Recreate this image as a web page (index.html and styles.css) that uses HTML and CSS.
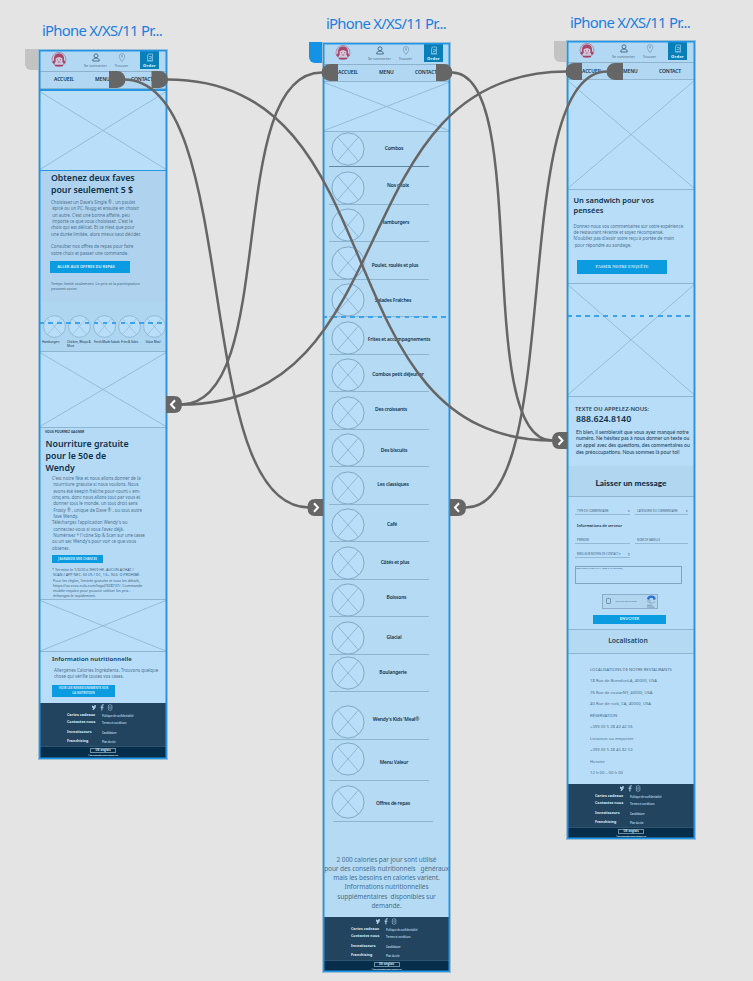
FILE: index.html
```html
<!DOCTYPE html>
<html lang="fr">
<head>
<meta charset="utf-8">
<title>Prototype</title>
<link rel="stylesheet" href="styles.css">
</head>
<body>
<svg class="defs" aria-hidden="true">
  <symbol id="x" viewBox="0 0 100 100" preserveAspectRatio="none"><path d="M0 0L100 100M100 0L0 100" fill="none" stroke="#8bb3d0" stroke-width=".8" vector-effect="non-scaling-stroke"/></symbol>
  <symbol id="ring" viewBox="0 0 34 34"><circle cx="17" cy="17" r="16.1" fill="#b9def9" stroke="#7fa9c6" stroke-width="1"/><path d="M6.500 5L27.500 29M27.500 5L6.500 29" stroke="#8bb3d0" stroke-width=".9"/></symbol>
  <symbol id="logo" viewBox="0 0 16 16"><circle cx="8" cy="7.500" r="7" fill="#c3cfe4" stroke="#a66d8c" stroke-width=".7"/><path d="M3 8C2.500 3.500 5 1.500 8 1.500s5.500 2 5 6.500l1.700 2.500-2 1.500-1.500-2.500V6H4.800v3.500L3.300 12l-2-1.500z" fill="#a8476a"/><path d="M4.800 6.500c2-2 4.400-2 6.400 0V9c0 2-1.800 3-3.200 3s-3.200-1-3.200-3z" fill="#d5c4d8"/><path d="M6 7.700h1M9 7.700h1M6.800 10h2.400" stroke="#a23f62" stroke-width=".7"/><path d="M4 13.500h8" stroke="#a23f62" stroke-width="1.500"/></symbol>
  <symbol id="user" viewBox="0 0 8 9"><circle cx="4" cy="2.800" r="2" fill="none" stroke="#43647e" stroke-width=".9"/><path d="M.8 8V6.500Q2.500 5 4 5t3.200 1.500V8z" fill="none" stroke="#43647e" stroke-width=".9"/></symbol>
  <symbol id="pin" viewBox="0 0 8 9"><path d="M4 8.500C2.500 6.500 1.300 5 1.300 3.300a2.700 2.700 0 0 1 5.400 0C6.700 5 5.500 6.500 4 8.500z" fill="none" stroke="#7398b4" stroke-width=".7"/><path d="M3 3.200h2M4 2v2.500" stroke="#7398b4" stroke-width=".7"/></symbol>
  <symbol id="bag" viewBox="0 0 8 9"><path d="M2.300 1h4.200v6.500h-5V3zM2.800 3.500h2.500v2h-2.500M1 8h6" fill="none" stroke="#9ed2ef" stroke-width=".7"/></symbol>
  <symbol id="social" viewBox="0 0 22 7"><path d="M1 1.300l1.500 1L4 1l1 .3-.4 2.200L2.800 6 1.300 5.700l.8-1.200L1 3.200z" fill="#a9cce5"/><path d="M12.800.8h-.6q-1.300 0-1.300 1.400V6.500M9.500 3.200h3" fill="none" stroke="#a9cce5" stroke-width="1.100"/><rect x="17.300" y=".8" width="3.600" height="5.400" rx="1.300" fill="none" stroke="#7fa3bd" stroke-width=".9"/><circle cx="19.100" cy="3.500" r=".9" fill="none" stroke="#7fa3bd" stroke-width=".6"/></symbol>
</svg>
<main class="canvas">
  <h1 class="name name-1">iPhone X/XS/11 Pr...</h1>
  <h1 class="name name-2">iPhone X/XS/11 Pr...</h1>
  <h1 class="name name-3">iPhone X/XS/11 Pr...</h1>
  <i class="tab tab-1"></i><i class="tab tab-2"></i><i class="tab tab-3"></i>

  <article class="board board-1">
    <header class="top"><svg class="logo"><use href="#logo"/></svg><span class="act a-user"><svg><use href="#user"/></svg>Se connecter</span><span class="act a-pin"><svg><use href="#pin"/></svg>Trouver</span><span class="act order"><svg><use href="#bag"/></svg>Order</span></header>
    <nav class="nav"><span>ACCUEIL</span><span>MENU</span><span>CONTACT</span></nav>
    <svg class="pic hero selected"><use href="#x"/></svg>
    <section class="promo">
      <h2>Obtenez deux faves<br>pour seulement 5 $</h2>
      <p class="body">Choisissez un Dave's Single ® , un poulet
 épicé ou un PC. Nugg et ensuite en choisir
 un autre. C'est une bonne affaire, peu
 importe ce que vous choisissez. C'est le
choix qui est délicat. Et ce n'est que pour
une durée limitée, alors mieux vaut décider.</p>
      <p class="body second">Consultez nos offres de repas pour faire
votre choix et passer une commande.</p>
      <a class="btn">ALLER AUX OFFRES DU REPAS</a>
      <p class="fine">Temps limité seulement. Le prix et la participation
peuvent varier.</p>
    </section>
    <section class="cats">
      <div><svg><use href="#ring"/></svg><span>Hamburgers</span></div>
      <div><svg><use href="#ring"/></svg><span>Chicken, Wraps &amp;
More</span></div>
      <div><svg><use href="#ring"/></svg><span>Fresh-Made Salads</span></div>
      <div><svg><use href="#ring"/></svg><span>Fries &amp; Sides</span></div>
      <div><svg><use href="#ring"/></svg><span>Value Meal</span></div>
    </section>
    <svg class="pic mid"><use href="#x"/></svg>
    <section class="free">
      <p class="eyebrow">VOUS POURREZ GAGNER</p>
      <h2>Nourriture gratuite<br>pour le 50e de<br>Wendy</h2>
      <p class="body">C'est notre fête et nous allons donner de la
 nourriture gratuite si nous voulons. Nous
 avons été keepin fraîche pour-count « em-
cinq ans, donc nous allons tout par vous et
 donner tout le monde, un tout droit sans
 Frosty ® , unique de Dave ® , ou tout autre
 fave Wendy.
Téléchargez l'application Wendy's ou
 connectez-vous si vous l'avez déjà.
 Numérisez * l'icône Sip &amp; Scan sur une tasse
ou un sac Wendy's pour voir ce que vous
obtenez.</p>
      <a class="btn">J'AGRANDIS MES CHANCES</a>
      <p class="fine">* Termine le 1/3/20 à 9H59 HE. AUCUN ACHAT /
 SCAN / APP NEC. 50 US / DC, 13+. NUL O PROHIBÉ.
 Pour les règles, l'entrée gratuite et tous les détails,
 https://us.coca-cola.com/legal/928737/. Commande
 mobile requise pour pouvoir utiliser les prix -
 échangez-le rapidement.</p>
    </section>
    <svg class="pic low"><use href="#x"/></svg>
    <section class="nutri">
      <h3>Information nutritionnelle</h3>
      <p class="body">Allergènes Calories Ingrédients. Trouvons quelque
chose qui vérifie toutes vos cases.</p>
      <a class="btn">VOIR LES RENSEIGNEMENTS SUR
LA NUTRITION</a>
    </section>
    <footer class="foot"><svg><use href="#social"/></svg><ul><li>Cartes cadeaux</li><li>Contactez nous</li><li>Investisseurs</li><li>Franchising</li></ul><ul class="links"><li>Politique de confidentialité</li><li>Termes et conditions</li><li>Candidature</li><li>Plan du site</li></ul></footer>
    <div class="legal"><span>US: anglais</span><small>©2019 quality is our recipe LLC</small></div>
    <i class="fold fold-1"></i>
  </article>

  <article class="board board-2">
    <header class="top"><svg class="logo"><use href="#logo"/></svg><span class="act a-user"><svg><use href="#user"/></svg>Se connecter</span><span class="act a-pin"><svg><use href="#pin"/></svg>Trouver</span><span class="act order"><svg><use href="#bag"/></svg>Order</span></header>
    <nav class="nav"><span>ACCUEIL</span><span>MENU</span><span>CONTACT</span></nav>
    <svg class="pic banner"><use href="#x"/></svg>
    <ul class="menu">
      <li class="m1"><svg><use href="#ring"/></svg><span>Combos</span></li>
      <li class="m2"><svg><use href="#ring"/></svg><span>Nos choix</span></li>
      <li class="m3"><svg><use href="#ring"/></svg><span>Hamburgers</span></li>
      <li class="m4"><svg><use href="#ring"/></svg><span>Poulet, roulés et plus</span></li>
      <li class="m5"><svg><use href="#ring"/></svg><span>Salades Fraîches</span></li>
      <li class="m6"><svg><use href="#ring"/></svg><span>Frites et accompagnements</span></li>
      <li class="m7"><svg><use href="#ring"/></svg><span>Combos petit déjeuner</span></li>
      <li class="m8"><svg><use href="#ring"/></svg><span>Des croissants</span></li>
      <li class="m9"><svg><use href="#ring"/></svg><span>Des biscuits</span></li>
      <li class="m10"><svg><use href="#ring"/></svg><span>Les classiques</span></li>
      <li class="m11"><svg><use href="#ring"/></svg><span>Café</span></li>
      <li class="m12"><svg><use href="#ring"/></svg><span>Côtés et plus</span></li>
      <li class="m13"><svg><use href="#ring"/></svg><span>Boissons</span></li>
      <li class="m14"><svg><use href="#ring"/></svg><span>Glacial</span></li>
      <li class="m15"><svg><use href="#ring"/></svg><span>Boulangerie</span></li>
      <li class="m16"><svg><use href="#ring"/></svg><span>Wendy's Kids 'Meal®</span></li>
      <li class="m17"><svg><use href="#ring"/></svg><span>Menu Valeur</span></li>
      <li class="m18"><svg><use href="#ring"/></svg><span>Offres de repas</span></li>
    </ul>
    <p class="calories">2 000 calories par jour sont utilisé
pour des conseils nutritionnels &nbsp; généraux
mais les besoins en calories varient.
Informations nutritionnelles
supplémentaires &nbsp;disponibles sur
demande.</p>
    <footer class="foot"><svg><use href="#social"/></svg><ul><li>Cartes cadeaux</li><li>Contactez nous</li><li>Investisseurs</li><li>Franchising</li></ul><ul class="links"><li>Politique de confidentialité</li><li>Termes et conditions</li><li>Candidature</li><li>Plan du site</li></ul></footer>
    <div class="legal"><span>US: anglais</span><small>©2019 quality is our recipe LLC</small></div>
    <i class="fold fold-2"></i>
  </article>

  <article class="board board-3">
    <header class="top"><svg class="logo"><use href="#logo"/></svg><span class="act a-user"><svg><use href="#user"/></svg>Se connecter</span><span class="act a-pin"><svg><use href="#pin"/></svg>Trouver</span><span class="act order"><svg><use href="#bag"/></svg>Order</span></header>
    <nav class="nav"><span>ACCUEIL</span><span>MENU</span><span>CONTACT</span></nav>
    <svg class="pic sandwich"><use href="#x"/></svg>
    <section class="survey">
      <h3>Un sandwich pour vos<br>pensées</h3>
      <p class="body">Donnez-nous vos commentaires sur votre expérience
de restaurant récente et soyez récompensé.
N'oubliez pas d'avoir votre reçu à portée de main
 pour répondre au sondage.</p>
      <a class="btn">PASSER NOTRE ENQUÊTE</a>
    </section>
    <svg class="pic phone-pic"><use href="#x"/></svg>
    <section class="call">
      <h4>TEXTE OU APPELEZ-NOUS:</h4>
      <strong>888.624.8140</strong>
      <p>Eh bien, il semblerait que vous ayez manqué notre
numéro. Ne hésitez pas à nous donner un texte ou
un appel avec des questions, des commentaires ou
des préoccupations. Nous sommes là pour toi!</p>
    </section>
    <h2 class="band leave">Laisser un message</h2>
    <form class="form">
      <div class="pair first"><span>TYPE DE COMMENTAIRE<b>▾</b></span><span>CATÉGORIE DU COMMENTAIRE<b>▾</b></span></div>
      <h5>Informations de serveur</h5>
      <div class="pair"><span>PRÉNOM</span><span>NOM DE FAMILLE</span></div>
      <div class="pair third"><span>MEILLEUR MOYEN DE CONTACT ▾<b>▯</b></span></div>
      <div class="area">COMMENTAIRES (MAX 1000 CARACTÈRES)</div>
      <div class="captcha"><i></i><span>Je ne suis pas un robot</span><svg viewBox="0 0 10 12"><path d="M1 4a4 3.500 0 0 1 8 0l-2 .5a2 2 0 0 0-4 0z" fill="#2e70cf"/><path d="M1 4.500h4L4 6q2 1.500 4-.5l1 1Q5 10 1 7z" fill="#9dbad3"/><path d="M1 9.500h5M1 11.200h7" stroke="#66869f" stroke-width=".7"/></svg></div>
      <a class="btn">ENVOYER</a>
    </form>
    <h2 class="band where">Localisation</h2>
    <ul class="places">
      <li>LOCALISATIONS DE NOTRE RESTAURANTS</li>
      <li>18 Rue de BrendonLA, 40000, USA</li>
      <li>76 Rue de custarNY, 40000, USA</li>
      <li>40 Rue de rock, CA, 40000, USA</li>
      <li>RÉSERVATION</li>
      <li>+399 (0) 5 28 43 42 56</li>
      <li>Livraison ou emporter</li>
      <li>+399 (0) 5 28 45 82 53</li>
      <li>Horaire</li>
      <li>12 h 00 – 00 h 00</li>
    </ul>
    <footer class="foot"><svg><use href="#social"/></svg><ul><li>Cartes cadeaux</li><li>Contactez nous</li><li>Investisseurs</li><li>Franchising</li></ul><ul class="links"><li>Politique de confidentialité</li><li>Termes et conditions</li><li>Candidature</li><li>Plan du site</li></ul></footer>
    <div class="legal"><span>US: anglais</span><small>©2019 quality is our recipe LLC</small></div>
    <i class="fold fold-3"></i>
  </article>

  <svg class="wires" viewBox="0 0 753 981">
    <g fill="none" stroke="#666" stroke-width="2.500">
      <path d="M124 79.500C243 79.500 190 507.500 309 507.500"/>
      <path d="M167 79.500C401 79.500 319 440.500 553 440.500"/>
      <path d="M181 404.500C280 404.500 223 72.500 322 72.500"/>
      <path d="M181 404.500C410 404.500 338 71.500 567 71.500"/>
      <path d="M452 72.500C532 72.500 472 440.500 552 440.500"/>
      <path d="M466 507.500C566 507.500 507 71.500 607 71.500"/>
    </g>
    <g fill="#666">
      <path d="M109 71h8a8.500 8.500 0 0 1 0 17h-8zM151.500 71h8a8.500 8.500 0 0 1 0 17h-8z"/>
      <path d="M338 64h-8a8.500 8.500 0 0 0 0 17h8zM436 64h8a8.500 8.500 0 0 1 0 17h-8z"/>
      <path d="M582 63h-8a8.500 8.500 0 0 0 0 17h8zM623 63h-8a8.500 8.500 0 0 0 0 17h8z"/>
      <path d="M166 396h8q8 0 8 8.500t-8 8.500h-8zM450 499h8q8 0 8 8.500t-8 8.500h-8zM323 499h-8q-7.500 0-7.500 8.500t7.500 8.500h8zM567.500 432h-8q-7.500 0-7.500 8.500t7.500 8.500h8z"/>
    </g>
    <path d="M175 400.300l-4 4.200 4 4.200M459 503.300l-4 4.200 4 4.200M314 503.300l4 4.200-4 4.200M558.500 436.300l4 4.200-4 4.200" fill="none" stroke="#fff" stroke-width="2"/>
  </svg>
</main>
</body>
</html>
```
FILE: styles.css
```css
* { box-sizing: border-box; margin: 0; padding: 0; }
body { background: #e4e4e4; font-family: "Noto Sans", "Open Sans", sans-serif; color: #12344f; }
ul { list-style: none; }
svg { display: block; }
.defs { position: absolute; width: 0; height: 0; }
.canvas { position: relative; width: 753px; height: 981px; overflow: hidden; }

.name { position: absolute; font-size: 14.800px; font-weight: 400; line-height: 20px; letter-spacing: -.7px; color: #1a7fe0; white-space: nowrap; }
.name-1 { left: 42px; top: 20px; }
.name-2 { left: 326px; top: 13px; }
.name-3 { left: 570px; top: 12px; }

.tab { position: absolute; width: 13px; height: 21px; border-radius: 0 0 0 6px; background: #c3c3c3; }
.tab-1 { left: 25px; top: 49px; }
.tab-2 { left: 309px; top: 42px; background: #1492e6; }
.tab-3 { left: 554px; top: 41px; }

.board { position: absolute; display: flex; flex-direction: column; width: 128px; background: #b8ddf8; box-shadow: 0 0 0 1px #9dbdd3; overflow: hidden; }
.board::after { content: ""; position: absolute; inset: 0; box-shadow: inset 0 0 0 1.500px #2494e4; }
.board-1 { left: 39px; top: 50px; height: 709px; }
.board-2 { left: 323px; top: 43px; width: 127px; height: 929px; }
.board-3 { left: 567px; top: 41px; height: 798px; }
.board > * { flex-shrink: 0; }
.fold { position: absolute; left: 0; right: 0; height: 1.500px; background: repeating-linear-gradient(90deg, #3ba3ee 0 4.500px, transparent 4.500px 9.100px); }
.fold-1 { top: 272px; }
.fold-2 { top: 273px; }
.fold-3 { top: 274px; }

.top { display: grid; grid-template-columns: 44px 25px 27px 5px 19px; height: 21.500px; padding-top: 1px; border-bottom: 1px solid #8db2cd; background: #b2d8f3; }
.logo { width: 16px; height: 16px; margin: 1px 0 0 12px; }
.act { display: flex; flex-direction: column; align-items: center; gap: 1px; padding-top: 2px; font-size: 3.600px; line-height: 5px; letter-spacing: .1px; color: #45677f; white-space: nowrap; }
.act svg { width: 8px; height: 9px; }
.a-user { grid-column: 2; }
.a-pin { grid-column: 3; }
.order { grid-column: 5; height: 18px; background: #087fb9; color: #d9effc; font-weight: 800; font-size: 4.200px; }
.nav { display: flex; height: 17.500px; padding-left: 15px; background: #b1d7f2; border-bottom: 1px solid #91b6d0; font-size: 5px; font-weight: 600; line-height: 15.500px; letter-spacing: -.12px; }
.nav span:nth-child(1) { width: 41px; }
.nav span:nth-child(2) { width: 36px; }
.board-3 .nav { line-height: 17px; }

.pic { width: 100%; border-bottom: 1px solid #8fb5d0; background: #b9def9; }
.pic.selected { border: solid #2494e4; border-width: 2px 0 1px; }
.hero { height: 82px; }
.body, .fine, .calories, .call p { white-space: pre; color: #4a7190; }
.body { font-size: 4.400px; line-height: 6.400px; }
.fine { font-size: 3.550px; line-height: 5.200px; color: #3b5f7b; }
.btn { display: flex; align-items: center; justify-content: center; background: #0b9be0; color: #cfebfa; font-weight: 700; text-align: center; white-space: pre; }
h2 { font-size: 8.800px; line-height: 12px; font-weight: 600; color: #0e304b; white-space: nowrap; }

.promo { height: 131px; padding: 1px 0 0 12px; background: #afd3ee; }
.promo h2 { letter-spacing: -.05px; }
.promo .body { margin-top: 2.800px; }
.promo .second { margin-top: 5.800px; line-height: 6.800px; }
.promo .btn { width: 80px; height: 12px; margin: 4px 0 0 -1px; padding-right: 8px; font-size: 4px; }
.promo .fine { margin-top: 8.500px; font-size: 3.800px; }

.cats { display: grid; grid-template-columns: 25px 28px 24px 23.500px 24px; height: 49.500px; padding-left: 3px; background: #afd6f1; border-bottom: 1px solid #8fb5d0; }
.cats svg { width: 23px; height: 23px; margin: 13px 0 2px 1px; }
.cats div:nth-child(3) svg { margin-left: -2px; }
.cats div:nth-child(4) svg { margin-left: -1px; }
.cats div:nth-child(5) svg { margin-left: 0; }
.cats span { display: block; font-size: 3.100px; line-height: 4px; letter-spacing: -.1px; white-space: pre; }
.cats div:nth-child(3) span { margin-left: -1px; }
.cats div:nth-child(4) span { margin-left: 2px; }
.cats div:nth-child(5) span { margin-left: 3px; }
.mid { height: 76px; }
.free { height: 172px; padding: 1px 0 0 13px; background: #b5daf5; border-bottom: 1px solid #8fb5d0; }
.eyebrow { margin-left: -7px; font-size: 3.300px; line-height: 5px; font-weight: 600; }
.free h2 { margin: 4px 0 0 -6.500px; }
.free .body { margin-top: 1.500px; font-size: 4.420px; line-height: 6.350px; }
.free .btn { width: 51px; height: 8px; margin-top: 3.500px; font-size: 3px; }
.free .fine { margin-top: 4.500px; font-size: 3.700px; }
.low { height: 52.500px; }
.nutri { height: 51px; padding: 2px 0 0 13px; }
.nutri h3 { font-size: 6px; line-height: 10px; font-weight: 600; letter-spacing: .1px; white-space: nowrap; }
.nutri .body { margin: 2.700px 0 0 2px; font-size: 4.420px; }
.nutri .btn { width: 63px; height: 12px; margin-top: 5px; font-size: 3.100px; line-height: 4.200px; }

.foot { display: grid; grid-template-columns: 35px 1fr; grid-template-rows: 8.500px 1fr; height: 44px; padding-left: 28px; background: #22445e; color: #d3ebfb; border-bottom: 1px solid #2f546f; }
.foot svg { grid-column: 1 / 3; width: 22px; height: 7px; margin: .500px 0 0 24px; }
.foot ul { font-size: 3.700px; line-height: 6px; font-weight: 700; white-space: nowrap; }
.foot li:nth-child(2) { margin-top: 1px; }
.foot li:nth-child(3) { margin-top: 4px; }
.foot li:nth-child(4) { margin-top: 3px; }
.foot .links { padding-top: 1.500px; font-size: 2.600px; font-weight: 600; letter-spacing: -.1px; color: #b3d1e5; }
.legal { display: flex; flex-direction: column; align-items: center; flex: 1 0 0; padding-top: 1px; background: #062d49; color: #cfe6f5; }
.legal span { width: 26px; height: 5px; border: 1px solid #6f8da3; font-size: 2.800px; line-height: 3px; text-align: center; font-weight: 700; }
.legal small { font-size: 2.400px; line-height: 4px; font-weight: 700; letter-spacing: -.2px; white-space: nowrap; }

.banner { height: 50px; }
.menu { height: 723px; background: #b4daf4; }
.menu li { position: relative; display: grid; grid-template-columns: 34px 60px; align-items: start; height: 37.500px; padding-left: 8px; --y: 0px; --x: 0px; --c: 1px; }
.menu li::after { content: ""; position: absolute; left: 6px; bottom: 0; width: 100px; height: 1px; background: #8eb5cf; }
.menu svg { width: 34px; height: 34px; margin-top: calc(var(--c) - .5px); }
.menu span { justify-self: center; width: max-content; margin: calc(var(--c) + 11px) -10px 0; font-size: 4.950px; line-height: 10px; font-weight: 600; letter-spacing: -.18px; white-space: nowrap; transform: translate(var(--x), var(--y)); }
.menu .m1 { height: 35px; --c: 0px; --x: -1px; }
.menu .m1::after { background: #5f87a3; }
.menu .m2 { --c: 4px; --x: 3px; --y: -2px; }
.menu .m3 { --c: 4px; --y: -3px; }
.menu .m4 { --c: 4px; --y: 2.500px; }
.menu .m5 { --c: 4px; --x: -2px; }
.menu .m6 { --c: 4px; --x: 4px; --y: 1.500px; }
.menu .m7 { --c: 4px; --x: 3px; --y: -1.500px; }
.menu .m8 { --c: 4px; --x: -4px; --y: -3px; }
.menu .m9 { --c: 4px; --x: -1px; }
.menu .m10 { --c: 4px; --x: -2px; --y: -3.500px; }
.menu .m11 { --c: 4px; --x: -3px; --y: -1px; }
.menu .m12 { --c: 4px; }
.menu .m13 { --c: 4px; --x: 1.500px; --y: -3px; }
.menu .m14 { --c: 4px; --x: -1px; --y: 0px; }
.menu .m15 { --c: 2px; --x: -2px; --y: -1px; }
.menu .m16 { height: 47.500px; --c: 13px; --x: 1px; --y: -2.500px; }
.menu .m17 { height: 41px; --c: 3px; --x: -1px; --y: 2.500px; }
.menu .m18 { height: 41px; --c: 5px; --x: -2px; --y: 1px; }
.menu .m18::after { left: 10px; }
.calories { height: 62px; display: flex; justify-content: center; font-size: 6.500px; line-height: 9.150px; letter-spacing: -.08px; text-align: center; background: #b4daf4; }

.sandwich { height: 110px; }
.survey { height: 94px; padding: 4.500px 0 0 6.500px; border-bottom: 1px solid #8fb5d0; }
.survey h3 { font-size: 7.500px; line-height: 10px; font-weight: 600; color: #0e304b; }
.survey .body { margin-top: 8px; font-size: 4.400px; }
.survey .btn { width: 90px; height: 14px; margin: 11.500px 0 0 3.500px; font: 900 4.200px/6px "Liberation Serif", serif; }
.phone-pic { height: 112.500px; }
.call { height: 69.500px; padding: 8.500px 0 0 8px; }
.call h4 { font-size: 5.900px; line-height: 8px; font-weight: 600; color: #234862; }
.call strong { display: block; margin-left: 1px; font-size: 8.800px; line-height: 12px; font-weight: 600; color: #0e304b; }
.call p { margin: 3.500px 0 0 1px; font: 500 5.150px/6.700px Lato, sans-serif; color: #214764; }
.band { display: flex; justify-content: center; background: #b0d6f0; border-bottom: 1px solid #8fb5d0; }
.leave { height: 30.500px; padding-top: 12px; font: 900 8.200px/10px Lato, sans-serif; letter-spacing: .08px; }
.form { height: 133px; padding: 12px 7px 0 8px; border-bottom: 1px solid #8fb5d0; font-size: 2.800px; color: #43688a; }
.pair { display: grid; grid-template-columns: 55px 53px; gap: 5px; line-height: 5px; white-space: nowrap; }
.pair span { display: flex; justify-content: space-between; height: 6px; padding-left: 2px; border-bottom: 1px solid #94b9d4; }
.form h5 { margin: 7px 0 8px 2px; font-size: 3.800px; line-height: 8px; font-weight: 600; color: #12344f; }
.third { margin-top: 8px; }
.area { width: 107px; height: 18px; margin-top: 8px; border: 1px solid #7fa5c1; line-height: 3px; font-size: 2.400px; }
.captcha { display: flex; align-items: center; gap: 4px; width: 56px; height: 15px; margin: 10px 0 6px 26.500px; padding-left: 3px; border: 1px solid #8aaec9; background: #b3d6f0; white-space: nowrap; font-size: 2px; }
.captcha i { width: 6px; height: 6px; border: 1px solid #7398b4; border-radius: 1px; }
.captcha span { width: 27px; }
.captcha svg { width: 11px; height: 13px; }
.form .btn { width: 73px; height: 9px; margin-left: 18px; font: 900 4.200px/6px Lato, sans-serif; }
.where { height: 24.500px; font-size: 6.800px; line-height: 22px; padding-right: 6px; color: #234862; background: #b3d9f3; }
.places { height: 130px; padding: 10px 0 0 23px; font-size: 4.200px; line-height: 11.450px; color: #496f8c; white-space: nowrap; }

.wires { position: absolute; inset: 0; width: 753px; height: 981px; }
```
